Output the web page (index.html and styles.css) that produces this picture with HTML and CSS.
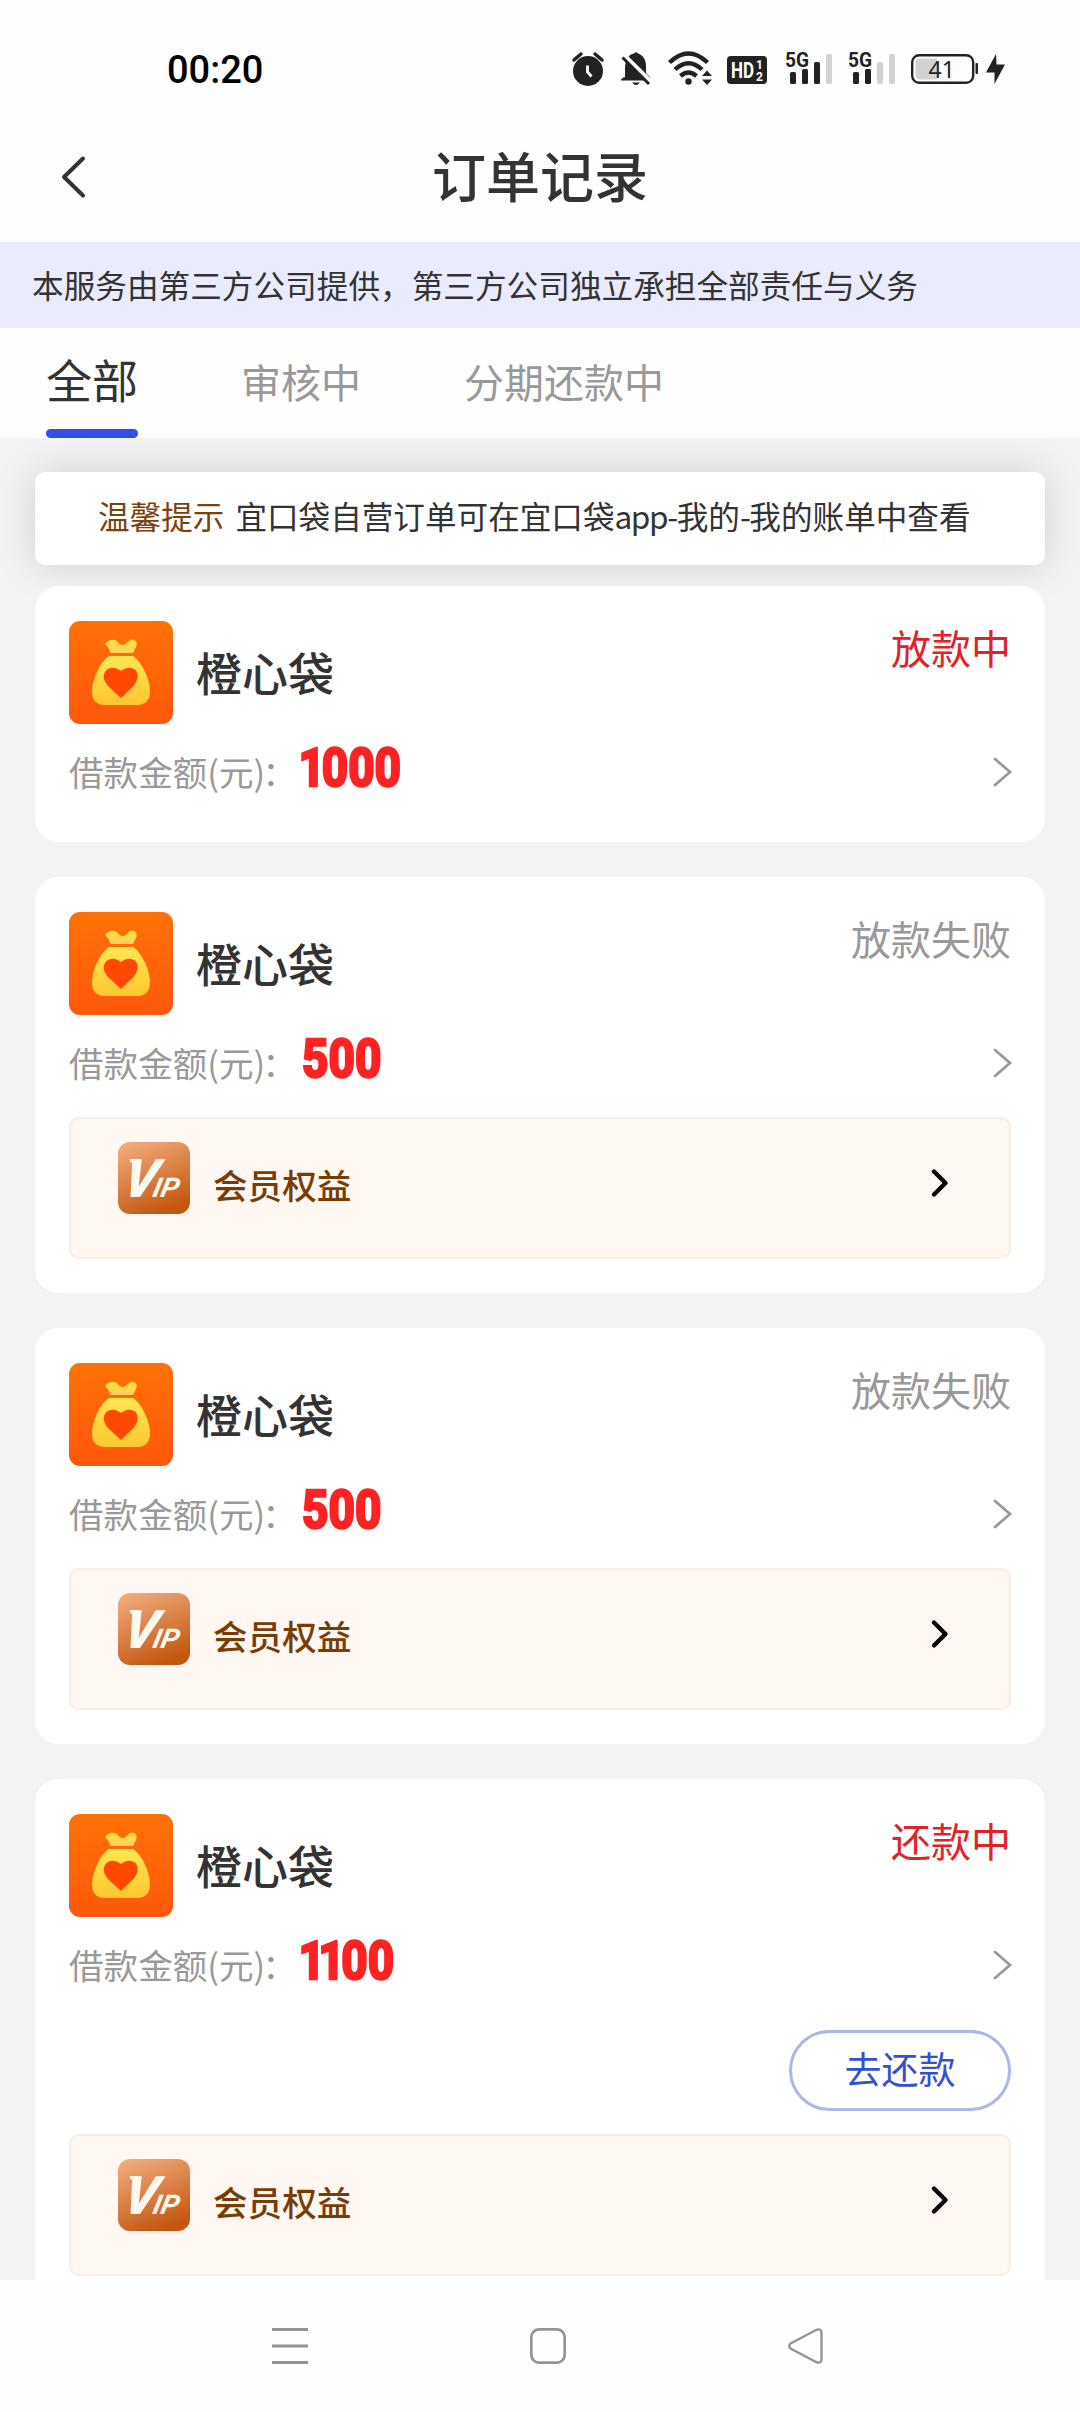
FILE: index.html
```html
<!DOCTYPE html>
<html lang="zh-CN">
<head>
<meta charset="utf-8">
<title>订单记录</title>
<link rel="stylesheet" href="styles.css">
</head>
<body>
<svg class="defs" width="0" height="0" aria-hidden="true">
  <defs>
    <linearGradient id="orange" x1="0" y1="0" x2="0" y2="1"><stop offset="0" stop-color="#ff7206"/><stop offset="1" stop-color="#ff570c"/></linearGradient>
    <linearGradient id="gold" x1="0" y1="0" x2="0" y2="1"><stop offset="0" stop-color="#ffe650"/><stop offset="1" stop-color="#ffc730"/></linearGradient>
    <linearGradient id="goldTop" x1="0" y1="0" x2="0" y2="1"><stop offset="0" stop-color="#ffe23e"/><stop offset="1" stop-color="#ffd060"/></linearGradient>
    <linearGradient id="bronze" x1="0.2" y1="0" x2="0.6" y2="1"><stop offset="0" stop-color="#f0aa7a"/><stop offset="1" stop-color="#c4560f"/></linearGradient>
  </defs>
  <symbol id="bag" viewBox="0 0 104 103">
    <rect width="104" height="103" rx="11" fill="url(#orange)"/>
    <path d="M36 23C38 19.500 44 17.500 47 19.500C50 22 51 24 54 24C58 24 59 17.500 65 19C69 21 68 25 66 28L64 32H41.500L39.500 27Z" fill="url(#goldTop)"/>
    <path d="M40 35H64C73 41 81 58 81 71C81 79 76 84 69 84H35C28 84 23 79 23 71C23 58 31 41 40 35Z" fill="url(#gold)"/>
    <path d="M52 77L39 65C32 57 35 50 39 48C44 45.500 48 47 52 50C56 47 60 45.500 65 48C69 50 71 57 64.500 65Z" fill="#ff4800"/>
  </symbol>
  <symbol id="vip" viewBox="0 0 72 72">
    <rect width="72" height="72" rx="12" fill="url(#bronze)"/>
    <path d="M11.500 17H20V20.500H12.500Z" fill="#fff8f1"/>
    <g transform="translate(0 55) skewX(-12)">
      <text x="3" y="0" class="vip-v" textLength="33" lengthAdjust="spacingAndGlyphs">V</text>
      <text x="33.500" y="0" class="vip-ip" textLength="26" lengthAdjust="spacingAndGlyphs">IP</text>
    </g>
  </symbol>
  <symbol id="more" viewBox="0 0 20 32"><path d="M2 3L17 16L2 29" fill="none" stroke="#999" stroke-width="2.800" stroke-linecap="round"/></symbol>
  <symbol id="go" viewBox="0 0 20 32"><path d="M4 4.500L15.500 16L4 27.500" fill="none" stroke="#000" stroke-width="4.400" stroke-linecap="round" stroke-linejoin="round"/></symbol>
</svg>

<header class="statusbar">
  <span class="clock">00:20</span>
  <svg class="status-icons" width="440" height="40" viewBox="570 50 440 40">
    <g fill="#222">
      <circle cx="588" cy="71" r="15"/>
      <path d="M574 60L581 54M602 60L595 54" stroke="#222" stroke-width="3.500" stroke-linecap="round"/>
      <path d="M587.500 65.500V72L591.500 76.500" fill="none" stroke="#fff" stroke-width="2.800"/>
      <path d="M625 77V69C625 60 629 54 634 53.500Q636 51 638 53.500C643 55 646 60 646 66V72Q646 74 649 76Q651 78 651 80.500H621Q621 78 625 77Z"/>
      <path d="M632 82.500H640Q636 87.500 632 82.500Z"/>
      <path d="M624.500 55.500L652 82.500" stroke="#fff" stroke-width="4"/>
      <path d="M622.500 57.500L649 84" stroke="#222" stroke-width="3"/>
      <g fill="none" stroke="#222" stroke-width="4.400">
        <path d="M669.500 62.500Q688.500 44.500 707.500 62.500"/><path d="M675 69.500Q688.500 57 702 69.500"/><path d="M680.500 76Q688.500 69 696.500 76"/>
      </g>
      <circle cx="688.500" cy="81.500" r="3.200"/>
      <path d="M702 76L707 70.500L712 76ZM702 79.500H712L707 85Z"/>
      <rect x="727" y="56" width="40" height="28" rx="4"/>
      <text x="731" y="78" class="st hd" textLength="23" lengthAdjust="spacingAndGlyphs">HD</text>
      <text x="756" y="69" class="st tiny">1</text><text x="756" y="81" class="st tiny">2</text>
      <text x="785" y="66.500" class="st net" textLength="24" lengthAdjust="spacingAndGlyphs">5G</text>
      <rect x="790" y="72" width="6" height="12" rx="1.500"/><rect x="802" y="69" width="6" height="15" rx="1.500"/><rect x="814" y="62" width="6" height="22" rx="1.500"/>
      <rect x="826" y="54" width="6" height="30" rx="1.500" fill="#d2d2d2"/>
      <text x="848" y="66.500" class="st net" textLength="24" lengthAdjust="spacingAndGlyphs">5G</text>
      <rect x="853" y="72" width="6" height="12" rx="1.500"/><rect x="865" y="69" width="6" height="15" rx="1.500"/>
      <rect x="877" y="62" width="6" height="22" rx="1.500" fill="#d2d2d2"/><rect x="889" y="54" width="6" height="30" rx="1.500" fill="#d2d2d2"/>
      <path d="M920 58.500H937V79.500H920Q915.500 79.500 915.500 75V63Q915.500 58.500 920 58.500Z" fill="#d2d2d2"/>
      <rect x="912.200" y="55.200" width="61" height="27.600" rx="7" fill="none" stroke="#222" stroke-width="2.400"/>
      <rect x="975.500" y="63" width="2.500" height="11" rx="1"/>
      <text x="928.500" y="78" class="st level">41</text>
      <path d="M996 54L986 72.500H994.500V84L1005 64.500H996.500Z"/>
    </g>
  </svg>
</header>

<nav class="titlebar">
  <svg class="back" width="30" height="46" viewBox="0 0 30 46"><path d="M23 4.500L4 23L23 41.500" fill="none" stroke="#333" stroke-width="4" stroke-linecap="round" stroke-linejoin="round"/></svg>
  <h1>订单记录</h1>
</nav>

<div class="notice">本服务由第三方公司提供，第三方公司独立承担全部责任与义务</div>

<div class="tabs">
  <div class="tab active">全部</div>
  <div class="tab">审核中</div>
  <div class="tab">分期还款中</div>
</div>

<main class="content">
  <div class="tip"><span class="tip-label">温馨提示</span><span>宜口袋自营订单可在宜口袋<span class="latin">app-</span>我的<span class="latin">-</span>我的账单中查看</span></div>

  <section class="card">
    <div class="top"><svg class="logo"><use href="#bag"/></svg><h2>橙心袋</h2><span class="state red">放款中</span></div>
    <div class="sum"><span class="label">借款金额(元)<span class="colon">：</span></span><span class="amount"><i>1</i>000</span><svg class="more"><use href="#more"/></svg></div>
  </section>

  <section class="card">
    <div class="top"><svg class="logo"><use href="#bag"/></svg><h2>橙心袋</h2><span class="state">放款失败</span></div>
    <div class="sum"><span class="label">借款金额(元)<span class="colon">：</span></span><span class="amount">500</span><svg class="more"><use href="#more"/></svg></div>
    <div class="member"><svg class="vip"><use href="#vip"/></svg><span>会员权益</span><svg class="go"><use href="#go"/></svg></div>
  </section>

  <section class="card">
    <div class="top"><svg class="logo"><use href="#bag"/></svg><h2>橙心袋</h2><span class="state">放款失败</span></div>
    <div class="sum"><span class="label">借款金额(元)<span class="colon">：</span></span><span class="amount">500</span><svg class="more"><use href="#more"/></svg></div>
    <div class="member"><svg class="vip"><use href="#vip"/></svg><span>会员权益</span><svg class="go"><use href="#go"/></svg></div>
  </section>

  <section class="card">
    <div class="top"><svg class="logo"><use href="#bag"/></svg><h2>橙心袋</h2><span class="state red">还款中</span></div>
    <div class="sum"><span class="label">借款金额(元)<span class="colon">：</span></span><span class="amount"><i>1</i><i>1</i>00</span><svg class="more"><use href="#more"/></svg></div>
    <div class="actions"><button class="repay">去还款</button></div>
    <div class="member"><svg class="vip"><use href="#vip"/></svg><span>会员权益</span><svg class="go"><use href="#go"/></svg></div>
  </section>
</main>

<footer class="navbar">
  <svg width="36" height="36" viewBox="0 0 36 36"><path d="M0 1.500H36M0 18H36M0 34.500H36" stroke="#949494" stroke-width="2.800"/></svg>
  <svg width="36" height="36" viewBox="0 0 36 36"><rect x="1.300" y="1.300" width="33.400" height="33.400" rx="8" fill="none" stroke="#949494" stroke-width="2.700"/></svg>
  <svg width="36" height="36" viewBox="0 0 36 36"><path d="M2.500 15.500L28 2Q33.500 0 33.500 5V31Q33.500 36 28 34L2.500 20.500Q0 18 2.500 15.500Z" fill="none" stroke="#949494" stroke-width="2.400"/></svg>
</footer>
</body>
</html>
```

FILE: styles.css
```css
* { box-sizing: border-box; margin: 0; padding: 0; }
body {
  width: 1080px; height: 2412px; overflow: hidden;
  display: flex; flex-direction: column;
  background: #fefefe; color: #333;
  font-family: "Noto Sans CJK SC", sans-serif;
}
svg { display: block; flex: none; }
.defs { position: absolute; }
h1, h2 { font-weight: 500; }

.statusbar { height: 110px; flex: none; display: flex; justify-content: space-between; align-items: flex-start; padding: 50px 70px 0 167px; }
.clock { font: 500 38px/41px Roboto, sans-serif; color: #000; }
.st { font-family: Roboto, sans-serif; font-weight: 700; }
.hd { font-size: 22px; fill: #fff; }
.tiny { font-size: 12px; fill: #fff; }
.net { font-size: 20px; }
.level { font-family: "Noto Sans", sans-serif; font-weight: 400; font-size: 23px; }

.titlebar { height: 132px; flex: none; display: grid; grid-template-columns: 100px 1fr 100px; padding-top: 33px; }
.back { margin: 11px 0 0 60px; }
h1 { text-align: center; font-size: 54px; line-height: 64px; }

.notice { height: 86px; flex: none; padding-left: 32px; background: #eaecfd; font-size: 31.650px; line-height: 85px; white-space: nowrap; }

.tabs { height: 110px; flex: none; display: flex; gap: 103px; padding-left: 46px; }
.tab { height: 110px; font-size: 40px; line-height: 107px; color: #999; }
.tab.active { font-size: 46px; line-height: 101px; color: #333; position: relative; }
.tab.active::after { content: ""; position: absolute; left: 0; right: 0; bottom: 0; height: 9px; border-radius: 4.500px; background: #334fe4; }

.content { height: 1842px; flex: none; overflow: hidden; background: #f3f3f3; padding: 34px 35px 0; display: flex; flex-direction: column; }
.tip { height: 93px; flex: none; margin-bottom: 21px; border-radius: 10px; background: #fff; box-shadow: 0 0 42px rgba(0,0,0,.15); display: flex; gap: 11px; padding-left: 63px; font-size: 31.600px; line-height: 87px; white-space: nowrap; }
.tip-label { color: #7a420e; }
.latin { letter-spacing: -1.500px; }

.card { flex: none; position: relative; margin-bottom: 35px; padding: 35px 34px 34px; border-radius: 24px; background: #fff; }
.top { display: flex; height: 103px; }
.logo { width: 104px; height: 103px; }
h2 { margin-left: 23px; font-size: 46px; line-height: 100px; }
.state { margin-left: auto; font-size: 40px; line-height: 52px; color: #999; }
.state.red { color: #e02329; }
.sum { display: flex; height: 84px; padding-top: 15px; }
.label { width: 233px; font-size: 34.600px; line-height: 64px; color: #999; white-space: nowrap; }
.colon { margin-left: -3px; }
.amount { font: 800 54px/57px Roboto, sans-serif; color: #ff2222; -webkit-text-stroke: 2.400px #ff2222; stroke-linejoin: round; transform: scaleX(.85); transform-origin: 0 0; }
.amount i { font-style: normal; margin: 0 -4px 0 -4px; }
.more { width: 20px; height: 32px; margin: 17px -2px 0 auto; }
.member { height: 142px; margin-top: 18px; padding: 23px 58px 0 47px; display: flex; border: 2px solid #fbece0; border-radius: 10px; background: #fff8f2; color: #7a3c05; }
.member span { margin-left: 23px; font-size: 34.600px; font-weight: 500; line-height: 85px; }
.vip { width: 72px; height: 72px; }
.vip-v, .vip-ip { font-family: Roboto, sans-serif; font-weight: 700; font-style: italic; fill: #fff8f1; }
.vip-v { font-size: 53px; font-weight: 900; }
.vip-ip { font-size: 27px; }
.go { width: 20px; height: 32px; margin: 25px 1px 0 auto; }
.actions { display: flex; justify-content: flex-end; padding-top: 29px; height: 114px; }
.repay { width: 222px; height: 81px; margin-bottom: 4px; border: 3px solid #aab7e8; border-radius: 41px; background: #fff; font-family: inherit; font-size: 37px; line-height: 68px; padding-bottom: 6px; color: #3450cf; }
.actions + .member { margin-top: 19px; }

.navbar { flex: 1; display: flex; justify-content: space-between; padding: 48px 256px 0 272px; }
```
